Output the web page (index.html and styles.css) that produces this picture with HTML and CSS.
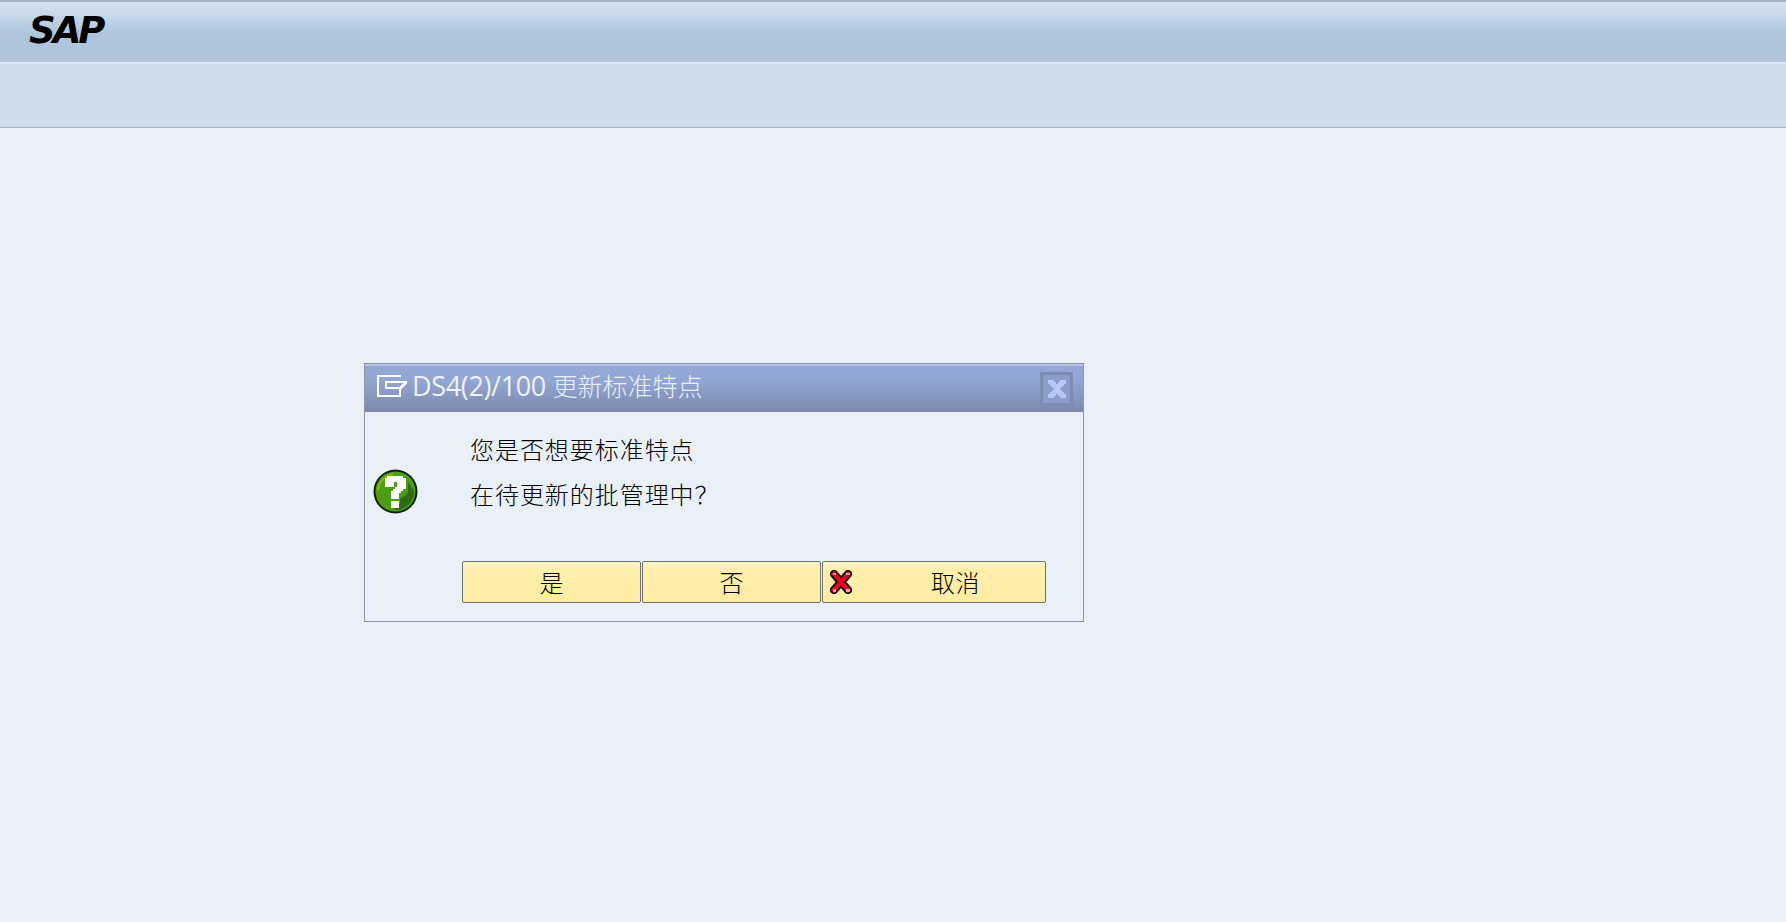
FILE: index.html
```html
<!DOCTYPE html>
<html lang="zh">
<head>
<meta charset="utf-8">
<title>SAP</title>
<link rel="stylesheet" href="styles.css">
</head>
<body>
<header class="titlebar"><span class="logo">SAP</span></header>
<div class="toolbar"></div>
<main class="workarea"></main>
<section class="dialog">
  <div class="dialog-head">
    <svg class="win-icon" width="30" height="22" viewBox="0 0 30 22" shape-rendering="crispEdges"><path d="M0 0H24V2H2V20H22V14H24V22H0Z M8 6H30V8L24 14H8Z M10 8V12H22L26 8Z" fill="#fff" fill-rule="evenodd"/></svg>
    <h1 class="dialog-title"><span class="sys">DS4(2)/100</span> <span class="cjk">更新标准特点</span></h1>
    <button class="close" aria-label="关闭"><svg width="18" height="18" viewBox="0 0 9 9" shape-rendering="crispEdges"><path d="M0 0H3V1H4V2H5V1H6V0H9V2H8V3H7V4H6V5H7V6H8V7H9V9H6V8H5V7H4V8H3V9H0V7H1V6H2V5H3V4H2V3H1V2H0Z" fill="#b5c9f5"/></svg></button>
  </div>
  <div class="dialog-body">
    <svg class="q-icon" width="45" height="45" viewBox="0 0 45 45">
      <circle cx="22.5" cy="22.5" r="22" fill="#10200a"/>
      <circle cx="22.5" cy="22.5" r="20" fill="#4d9e13"/>
      <path d="M4 21A19 19 0 0 1 20 4V6A17 17 0 0 0 6 21Z" fill="#86ba00"/>
      <path d="M41 22A18.500 18.500 0 0 1 23 41L17 35H27V30L35 24V13Z" fill="#2f6a14"/>
      <g shape-rendering="crispEdges" fill="#fff">
        <path d="M14 7H30V9H33V20H30V22H28V24H26V30H18V22H20V20H22V18H24V13H21V18H12V9H14Z"/>
        <path d="M18 32H26V39H18Z"/>
      </g>
    </svg>
    <div class="message">
      <p>您是否想要标准特点</p>
      <p>在待更新的批管理中？</p>
    </div>
  </div>
  <div class="actions">
    <button class="btn btn-std">是</button>
    <button class="btn btn-std">否</button>
    <button class="btn btn-cancel">
      <svg class="x-icon" width="22" height="24" viewBox="0 0 22 24">
        <path d="M4 4L18 20M18 4L4 20" stroke="#0a0a0a" stroke-width="8" stroke-linecap="round" fill="none"/>
        <path d="M4 4L18 20M18 4L4 20" stroke="#e8001c" stroke-width="4.500" stroke-linecap="square" fill="none"/>
        <path d="M2.500 2.500H6V5H2.500Z M16 2.500H19.500V5H16Z M2.500 19H6V21.500H2.500Z M16 19H19.500V21.500H16Z" fill="#f6a0a8" shape-rendering="crispEdges"/>
      </svg>
      <span>取消</span>
    </button>
  </div>
</section>
</body>
</html>
```
FILE: styles.css
```css
* { box-sizing: border-box; }
html, body { height: 100%; }
body {
  margin: 0;
  display: flex;
  flex-direction: column;
  background: #e9f0f7;
  font-family: "Noto Sans CJK SC", sans-serif;
  overflow: hidden;
}
.titlebar {
  height: 62px;
  flex: none;
  padding-left: 29px;
  border-top: 2px solid #a9b3c4;
  background: linear-gradient(#d5e3ef 0, #d0dfec 5px, #afc5dc 32px, #adc4db 100%);
  display: flex;
  align-items: flex-start;
}
.logo {
  font: italic bold 37px/1 "DejaVu Sans", sans-serif;
  letter-spacing: -3px;
  color: #000;
  margin-top: 10px;
}
.toolbar {
  height: 66px;
  flex: none;
  background: #cfdde8;
  border-top: 2px solid #dbe6ef;
  border-bottom: 1px solid #a8b5c3;
}
.workarea { flex: 1; }
.dialog {
  position: absolute;
  left: 364px;
  top: 363px;
  width: 720px;
  height: 259px;
  background: #e9f0f7;
  border: 1px solid #8a94ad;
  display: flex;
  flex-direction: column;
}
.dialog-head {
  height: 48px;
  flex: none;
  border-top: 2px solid #b5c4e4;
  background: linear-gradient(#95a9d8 0, #92a6d4 15px, #7a89ab 100%);
  display: flex;
  align-items: center;
  padding-left: 12px;
  padding-right: 10px;
}
.win-icon { flex: none; margin: 0 5px 6px 0; }
.dialog-title {
  flex: 1;
  margin: 0 0 8px;
  font-size: 25px;
  font-weight: 400;
  line-height: 1;
  white-space: nowrap;
}
.sys { font-family: "Open Sans", sans-serif; font-size: 27px; color: #eef3fd; letter-spacing: -.35px; }
.cjk { color: #eaeffa; font-weight: 300; margin-left: 1px; }
.close {
  width: 33px;
  height: 34px;
  padding: 0;
  border: 3px solid #7b8cb0;
  background: #8a9dca;
  display: flex;
  align-items: center;
  justify-content: center;
}
.dialog-body {
  flex: 1;
  display: flex;
  align-items: center;
  padding-left: 8px;
}
.q-icon { flex: none; margin-top: 10px; }
.message { margin-left: 52px; align-self: flex-start; margin-top: 14px; }
.message p {
  margin: 0;
  font-size: 24px;
  line-height: 45px;
  font-weight: 300;
  color: #000;
  letter-spacing: .95px;
}
.actions {
  flex: none;
  display: flex;
  gap: 1px;
  padding-left: 97px;
  padding-bottom: 18px;
}
.btn {
  height: 42px;
  padding: 0;
  border: 1px solid #6f7171;
  border-radius: 2px;
  background: linear-gradient(#fff6cf 0, #ffefaa 8px, #ffeda5 100%);
  font: 300 24px/1 "Noto Sans CJK SC", sans-serif;
  color: #000;
}
.btn-std { width: 179px; }
.btn-cancel {
  width: 224px;
  display: flex;
  align-items: center;
  padding-left: 7px;
}
.btn-cancel span { margin-left: 79px; letter-spacing: .5px; }
.x-icon { flex: none; }
```
